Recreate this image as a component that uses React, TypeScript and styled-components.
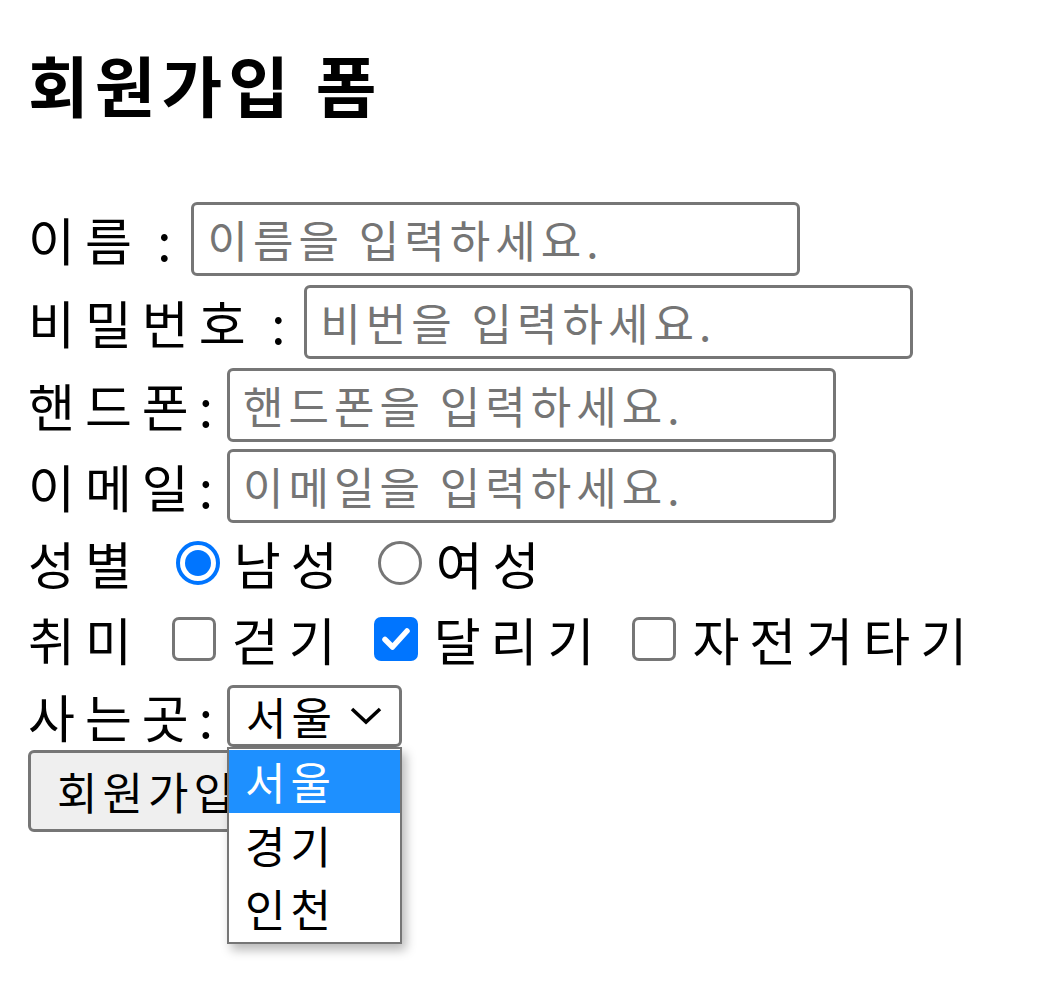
import React, { useState } from 'react';
import styled, { createGlobalStyle } from 'styled-components';

const GlobalStyle = createGlobalStyle`
  html, body {
    margin: 0;
    padding: 0;
    background: #ffffff;
  }
  body {
    font-family: "Noto Sans CJK KR", "Noto Sans", sans-serif;
    color: #000000;
  }
`;

const Page = styled.div`
  padding: 40px 0 0 28px;
  width: 1050px;
  height: 1004px;
  box-sizing: border-box;
`;

const Title = styled.h2`
  margin: 0;
  height: 157px;
  font-size: 66px;
  font-weight: 700;
  line-height: 86px;
  letter-spacing: 6px;
`;

const Form = styled.form`
  display: flex;
  flex-direction: column;
`;

const Row = styled.div<{ $h: number }>`
  display: flex;
  align-items: center;
  height: ${props => props.$h}px;
  font-size: 51px;
  letter-spacing: 10px;
  white-space: nowrap;
`;

const Label = styled.span<{ $gap?: number }>`
  margin-right: ${props => props.$gap ?? 4}px;
`;

// the space before the colon is narrower than the letter gaps
const Thin = styled.span`
  letter-spacing: 4px;
`;

const TextInput = styled.input`
  width: 609px;
  height: 74px;
  box-sizing: border-box;
  border: 3px solid #767676;
  border-radius: 6px;
  padding: 0 13px;
  font-family: inherit;
  font-size: 44px;
  letter-spacing: 5px;
  color: #000;
  outline: none;
  &::placeholder {
    color: #757575;
  }
`;

const Radio = styled.span<{ $on?: boolean }>`
  flex: none;
  width: 44px;
  height: 44px;
  box-sizing: border-box;
  border-radius: 50%;
  border: ${props => (props.$on ? '4px solid #0075ff' : '3px solid #767676')};
  display: flex;
  align-items: center;
  justify-content: center;
  margin-right: 14px;
  &::after {
    content: '';
    display: ${props => (props.$on ? 'block' : 'none')};
    width: 26px;
    height: 26px;
    border-radius: 50%;
    background: #0075ff;
  }
`;

const Check = styled.span<{ $on?: boolean }>`
  flex: none;
  width: 44px;
  height: 44px;
  box-sizing: border-box;
  border-radius: 7px;
  border: ${props => (props.$on ? 'none' : '3px solid #767676')};
  background: ${props => (props.$on ? '#0075ff' : '#ffffff')};
  display: flex;
  align-items: center;
  justify-content: center;
  margin-right: 16px;
`;

const Option = styled.span<{ $gap?: number }>`
  margin-right: ${props => props.$gap ?? 30}px;
`;

const SelectWrap = styled.div`
  position: relative;
  letter-spacing: 5px;
`;

const SelectBox = styled.div`
  width: 175px;
  height: 62px;
  box-sizing: border-box;
  border: 3px solid #767676;
  border-radius: 6px;
  display: flex;
  align-items: center;
  justify-content: space-between;
  padding: 0 16px 0 16px;
  font-size: 44px;
`;

const Menu = styled.ul`
  position: absolute;
  left: 0;
  top: 62px;
  width: 175px;
  margin: 0;
  padding: 1px 0 2px;
  list-style: none;
  background: #ffffff;
  border: 2px solid #767676;
  box-sizing: border-box;
  box-shadow: 4px 6px 10px rgba(0, 0, 0, 0.28);
  z-index: 2;
`;

const MenuItem = styled.li<{ $active?: boolean }>`
  height: 63.5px;
  display: flex;
  align-items: center;
  padding-left: 16px;
  font-size: 44px;
  background: ${props => (props.$active ? '#1e90ff' : 'transparent')};
  color: ${props => (props.$active ? '#ffffff' : '#000000')};
`;

const Button = styled.button`
  height: 82px;
  padding: 0 26px;
  box-sizing: border-box;
  border: 3px solid #767676;
  border-radius: 6px;
  background: #efefef;
  font-family: inherit;
  font-size: 44px;
  letter-spacing: 5px;
  color: #000;
`;

const Chevron = () => (
  <svg width="34" height="20" viewBox="0 0 34 20">
    <path d="M3 3 L17 16 L31 3" fill="none" stroke="#000" strokeWidth="3.5" />
  </svg>
);

const Tick = () => (
  <svg width="34" height="34" viewBox="0 0 34 34">
    <path
      d="M6 17.5 L13.5 25 L28 9"
      fill="none"
      stroke="#fff"
      strokeWidth="5.5"
      strokeLinecap="round"
      strokeLinejoin="round"
    />
  </svg>
);

const cities = ['서울', '경기', '인천'];

export default function App() {
  const [city] = useState('서울');

  return (
    <Page>
      <GlobalStyle />
      <Title>회원가입 폼</Title>
      <Form>
        <Row $h={83}>
          <Label $gap={10}>
            이름<Thin> </Thin>:
          </Label>
          <TextInput placeholder="이름을 입력하세요." />
        </Row>
        <Row $h={83}>
          <Label $gap={9}>
            비밀번호<Thin> </Thin>:
          </Label>
          <TextInput placeholder="비번을 입력하세요." />
        </Row>
        <Row $h={83}>
          <Label>핸드폰:</Label>
          <TextInput placeholder="핸드폰을 입력하세요." />
        </Row>
        <Row $h={79}>
          <Label>이메일:</Label>
          <TextInput placeholder="이메일을 입력하세요." />
        </Row>
        <Row $h={75}>
          <Label $gap={34}>성별</Label>
          <Radio $on />
          <Option>남성</Option>
          <Radio />
          <Option>여성</Option>
        </Row>
        <Row $h={77}>
          <Label $gap={30}>취미</Label>
          <Check />
          <Option $gap={28}>걷기</Option>
          <Check $on>
            <Tick />
          </Check>
          <Option $gap={28}>달리기</Option>
          <Check />
          <Option>자전거타기</Option>
        </Row>
        <Row $h={77}>
          <Label>사는곳:</Label>
          <SelectWrap>
            <SelectBox>
              <span>{city}</span>
              <Chevron />
            </SelectBox>
            <Menu>
              {cities.map(c => (
                <MenuItem key={c} $active={c === city}>
                  {c}
                </MenuItem>
              ))}
            </Menu>
          </SelectWrap>
        </Row>
        <Row $h={73}>
          <Button type="button">회원가입</Button>
        </Row>
      </Form>
    </Page>
  );
}
